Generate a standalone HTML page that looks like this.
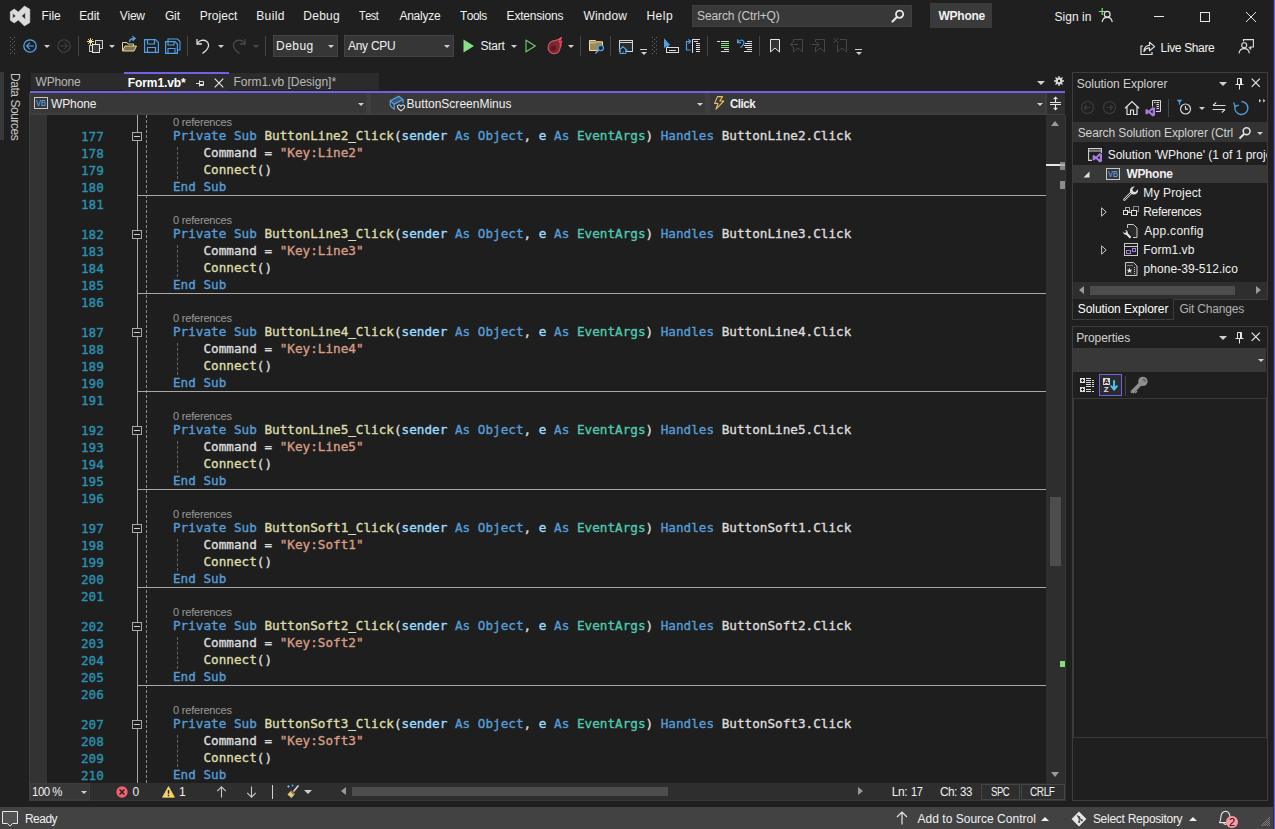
<!DOCTYPE html>
<html lang="en"><head><meta charset="utf-8"><title>WPhone - Form1.vb</title>
<style>
*{box-sizing:border-box;margin:0;padding:0}
html,body{width:1275px;height:829px;overflow:hidden;background:#1f1f1f}
body{position:relative;font-kerning:none;font-family:"Liberation Sans",sans-serif;font-size:12px;color:#f0f0f0;-webkit-font-smoothing:antialiased}
.a{position:absolute}
.t{position:absolute;white-space:nowrap;line-height:16px;height:16px;letter-spacing:-0.25px}
.b{font-weight:bold}
.dim{color:#9a9a9a}
svg{position:absolute;overflow:visible}
.code{font-family:"DejaVu Sans Mono","Liberation Mono",monospace;font-size:12.66px;letter-spacing:0;white-space:pre;line-height:17px;height:17px;position:absolute;color:#dcdcdc;-webkit-text-stroke:0.35px}
.ln{color:#2b91af}
.k{color:#569cd6}.m{color:#dcdcaa}.p{color:#9cdcfe}.ty{color:#4ec9b0}.s{color:#d69d85}.w{color:#dcdcdc}
.cl{position:absolute;font-size:11px;line-height:13px;height:13px;color:#999;white-space:nowrap;letter-spacing:-0.2px}
.arr{position:absolute;width:0;height:0;border-left:3px solid transparent;border-right:3px solid transparent;border-top:3px solid #d0d0d0}
.sep{position:absolute;width:1px;background:#454545}
</style></head><body>
<svg style="left:0;top:0" width="40" height="32"><path fill="#dcdcdc" fill-rule="evenodd" stroke="#dcdcdc" stroke-width="0.6" stroke-linejoin="round" d="M24.4 6.1 L29.8 9.2 V22.6 L24.4 25.9 L18.4 19.9 L14.2 22.9 L10.3 20.2 V11.8 L14.2 9.1 L18.4 12.1 Z M25.3 12.6 V19.4 L21.6 16 Z M12.7 13.2 V18.6 L15.8 16 Z"/></svg>
<div class="t" style="left:41.5px;top:8px;line-height:16px;height:16px;letter-spacing:-0.05px;">File</div>
<div class="t" style="left:79.2px;top:8px;line-height:16px;height:16px;letter-spacing:-0.07px;">Edit</div>
<div class="t" style="left:119.8px;top:8px;line-height:16px;height:16px;letter-spacing:-0.26px;">View</div>
<div class="t" style="left:164.9px;top:8px;line-height:16px;height:16px;letter-spacing:-0.11px;">Git</div>
<div class="t" style="left:199.7px;top:8px;line-height:16px;height:16px;letter-spacing:0.05px;">Project</div>
<div class="t" style="left:256.2px;top:8px;line-height:16px;height:16px;letter-spacing:0.39px;">Build</div>
<div class="t" style="left:303.3px;top:8px;line-height:16px;height:16px;letter-spacing:0.26px;">Debug</div>
<div class="t" style="left:359.3px;top:8px;line-height:16px;height:16px;letter-spacing:-0.50px;transform:scaleX(0.902);transform-origin:0 50%;">Test</div>
<div class="t" style="left:399.4px;top:8px;line-height:16px;height:16px;letter-spacing:-0.25px;">Analyze</div>
<div class="t" style="left:460.2px;top:8px;line-height:16px;height:16px;letter-spacing:-0.50px;transform:scaleX(0.992);transform-origin:0 50%;">Tools</div>
<div class="t" style="left:506.6px;top:8px;line-height:16px;height:16px;letter-spacing:-0.20px;">Extensions</div>
<div class="t" style="left:583.4px;top:8px;line-height:16px;height:16px;letter-spacing:0.17px;">Window</div>
<div class="t" style="left:646.4px;top:8px;line-height:16px;height:16px;letter-spacing:0.53px;">Help</div>
<div class="a" style="left:692px;top:5px;width:220px;height:22px;background:#383838;border:1px solid #404040"></div>
<div class="t" style="left:697.0px;top:8px;line-height:16px;height:16px;letter-spacing:-0.11px;color:#c8c8c8">Search (Ctrl+Q)</div>
<svg style="left:891px;top:9px" width="14" height="14" viewBox="0 0 14 14"><circle cx="8.6" cy="5.2" r="3.6" fill="none" stroke="#e6e6e6" stroke-width="1.8"/><path d="M6 8 L1.5 12.5" stroke="#e6e6e6" stroke-width="2.2" stroke-linecap="round"/></svg>
<div class="a" style="left:930px;top:3px;width:62px;height:25px;background:#3a3a3a"></div>
<div class="t" style="left:938.5px;top:8px;line-height:16px;height:16px;letter-spacing:-0.25px;font-weight:bold;">WPhone</div>
<div class="t" style="left:1054.5px;top:9px;line-height:16px;height:16px;letter-spacing:0.04px;">Sign in</div>
<svg style="left:1098px;top:7px" width="16" height="16" viewBox="0 0 16 16"><path d="M0.8 4.5 H7.6 M4.2 1 V8" stroke="#7ee07e" stroke-width="1.2"/><circle cx="9.2" cy="7.2" r="2.9" fill="none" stroke="#e6e6e6" stroke-width="1.2"/><path d="M4.2 15 C4.6 11.5 7 10.3 9.2 10.3 C11.4 10.3 13.8 11.5 14.2 15" fill="none" stroke="#e6e6e6" stroke-width="1.2"/></svg>
<svg style="left:1150px;top:8px" width="112" height="18" viewBox="0 0 112 18"><path d="M4 8.5 H14" stroke="#e6e6e6" stroke-width="1"/><rect x="50.5" y="4.5" width="9" height="9" fill="none" stroke="#e6e6e6" stroke-width="1"/><path d="M96 4 L106 14 M106 4 L96 14" stroke="#e6e6e6" stroke-width="1"/></svg>
<svg style="left:10px;top:37px" width="6" height="18" shape-rendering="crispEdges"><g fill="#6a6a6a"><rect x="0" y="0" width="1" height="1"/><rect x="2" y="2" width="1" height="1"/><rect x="4" y="0" width="1" height="1"/><rect x="0" y="4" width="1" height="1"/><rect x="2" y="6" width="1" height="1"/><rect x="4" y="4" width="1" height="1"/><rect x="0" y="8" width="1" height="1"/><rect x="2" y="10" width="1" height="1"/><rect x="4" y="8" width="1" height="1"/><rect x="0" y="12" width="1" height="1"/><rect x="2" y="14" width="1" height="1"/><rect x="4" y="12" width="1" height="1"/><rect x="0" y="16" width="1" height="1"/><rect x="4" y="16" width="1" height="1"/></g></svg>
<svg style="left:21.5px;top:37.6px" width="16" height="16" viewBox="0 0 16 16"><circle cx="8" cy="8" r="6.2" fill="none" stroke="#55a8f5" stroke-width="1.25"/><path d="M11.8 8 H4.8 M8 4.6 L4.6 8 L8 11.4" fill="none" stroke="#55a8f5" stroke-width="1.05"/></svg>
<div class="arr" style="left:44px;top:45px;border-left-width:3px;border-right-width:3px;border-top:3px solid #d0d0d0"></div>
<svg style="left:55.5px;top:37.6px" width="16" height="16" viewBox="0 0 16 16"><circle cx="8" cy="8" r="6.2" fill="none" stroke="#454545" stroke-width="1.1"/><path d="M4.2 8 H11.2 M8 4.6 L11.4 8 L8 11.4" fill="none" stroke="#454545" stroke-width="1"/></svg>
<div class="sep" style="left:78px;top:36px;height:20px;background:#454545"></div>
<svg style="left:87px;top:38px" width="17" height="17" viewBox="0 0 17 17"><path d="M3.5 0 V7 M0 3.5 H7 M1.1 1.1 L5.9 5.9 M5.9 1.1 L1.1 5.9" stroke="#f5e0a0" stroke-width="1"/><rect x="8.5" y="2.5" width="7" height="8" fill="#2c2c2c" stroke="#c8c8c8"/><rect x="2.5" y="7.5" width="6" height="6" fill="#2c2c2c" stroke="#c0c0c0"/><rect x="5.5" y="6.5" width="7" height="8" fill="#3a3a3a" stroke="#e6e6e6"/></svg>
<div class="arr" style="left:109px;top:45px;border-left-width:3px;border-right-width:3px;border-top:3px solid #d0d0d0"></div>
<svg style="left:121px;top:36.3px" width="17" height="17" viewBox="0 0 17 17"><path d="M1.5 15 V6.5 H6 L7 8 H12.5 V10" fill="none" stroke="#ecd592" stroke-width="1"/><path d="M1.5 15 L4 10 H15.5 L13 15 Z" fill="#ecd592" fill-opacity="0.45" stroke="#ecd592" stroke-width="1"/><path d="M8.5 6 C8.5 3.5 10.5 2.5 13.5 2.5 M11.5 0.3 L14 2.5 L11.5 4.8" fill="none" stroke="#4f9fe8" stroke-width="1.4"/></svg>
<svg style="left:144px;top:38px" width="15" height="16" viewBox="0 0 15 16"><path d="M0.6 1.6 H11.5 L14.4 4.5 V14.4 H0.6 Z" fill="none" stroke="#4f9fe8" stroke-width="1.2"/><path d="M3.5 1.6 V6 H10.5 V1.6" fill="none" stroke="#4f9fe8" stroke-width="1.2"/><path d="M3.5 14.4 V9.5 H11.5 V14.4" fill="none" stroke="#4f9fe8" stroke-width="1.2"/></svg>
<svg style="left:165px;top:38px" width="16" height="16" viewBox="0 0 16 16"><path d="M3 3 V1 H12.5 L15 3.5 V12 H13" fill="none" stroke="#4f9fe8" stroke-width="1.1"/><path d="M0.6 3.6 H10 L12.4 6 V15.4 H0.6 Z" fill="none" stroke="#4f9fe8" stroke-width="1.2"/><path d="M3 3.6 V7 H9 V3.6 M3 15.4 V10.5 H10 V15.4" fill="none" stroke="#4f9fe8" stroke-width="1.1"/></svg>
<div class="sep" style="left:187px;top:36px;height:20px;background:#454545"></div>
<svg style="left:196px;top:38px" width="15" height="16" viewBox="0 0 15 16"><path d="M1 1 V6 H6" fill="none" stroke="#e0e0e0" stroke-width="1.3"/><path d="M1.3 5.7 C3 2.5 7.5 1 10.8 3.5 C13.6 5.8 13 9.5 10 12.5 L6.5 15.5" fill="none" stroke="#e0e0e0" stroke-width="1.3"/></svg>
<div class="arr" style="left:218px;top:45px;border-left-width:3px;border-right-width:3px;border-top:3px solid #d0d0d0"></div>
<svg style="left:231px;top:38px" width="15" height="16" viewBox="0 0 15 16"><g transform="translate(15,0) scale(-1,1)"><path d="M1 1 V6 H6" fill="none" stroke="#4a4a4a" stroke-width="1.3"/><path d="M1.3 5.7 C3 2.5 7.5 1 10.8 3.5 C13.6 5.8 13 9.5 10 12.5 L6.5 15.5" fill="none" stroke="#4a4a4a" stroke-width="1.3"/></g></svg>
<div class="arr" style="left:252.5px;top:45px;border-left-width:3px;border-right-width:3px;border-top:3px solid #4a4a4a"></div>
<div class="sep" style="left:265px;top:36px;height:20px;background:#454545"></div>
<div class="a" style="left:273px;top:35px;width:65px;height:22px;background:#363636;border:1px solid #434343"></div>
<div class="t" style="left:276.0px;top:38px;line-height:16px;height:16px;letter-spacing:0.46px;">Debug</div>
<div class="arr" style="left:328px;top:45px;border-left-width:3px;border-right-width:3px;border-top:3px solid #d0d0d0"></div>
<div class="a" style="left:344px;top:35px;width:110px;height:22px;background:#363636;border:1px solid #434343"></div>
<div class="t" style="left:347.9px;top:38px;line-height:16px;height:16px;letter-spacing:-0.25px;">Any CPU</div>
<div class="arr" style="left:443.5px;top:45px;border-left-width:3px;border-right-width:3px;border-top:3px solid #d0d0d0"></div>
<svg style="left:463px;top:39px" width="12" height="14" viewBox="0 0 12 14"><path d="M0.5 0.5 L11 7 L0.5 13.5 Z" fill="#87df87"/></svg>
<div class="t" style="left:480.5px;top:38px;line-height:16px;height:16px;letter-spacing:-0.26px;">Start</div>
<div class="arr" style="left:511px;top:45px;border-left-width:3px;border-right-width:3px;border-top:3px solid #d0d0d0"></div>
<svg style="left:525px;top:39px" width="12" height="14" viewBox="0 0 12 14"><path d="M1 1.2 L10.3 7 L1 12.8 Z" fill="none" stroke="#6fcf6f" stroke-width="1.1"/></svg>
<svg style="left:547px;top:37px" width="16" height="18" viewBox="0 0 16 18"><path d="M1 10.7 C1 6 4.5 3.8 8 3.6 C10.5 3.4 12.8 2 14.5 0.5 C14 2.5 13 4 11.8 5.2 C13 5.2 14 4.8 14.8 4.2 C14.5 6 13.8 7.2 12.8 8.2 C13.3 8.4 13.8 8.3 14.2 8.1 C13.8 9.5 13.2 10 13 11 C13 14.3 10.3 16.7 7 16.7 C3.7 16.7 1 14 1 10.7 Z" fill="#7c2832" stroke="#e8525e" stroke-width="1.1" stroke-linejoin="round"/><circle cx="6.3" cy="11.2" r="2.6" fill="#5c1a24"/></svg>
<div class="arr" style="left:567.5px;top:45px;border-left-width:3px;border-right-width:3px;border-top:3px solid #d0d0d0"></div>
<div class="sep" style="left:580px;top:36px;height:20px;background:#454545"></div>
<svg style="left:588px;top:39px" width="18" height="16" viewBox="0 0 18 16"><path d="M1.5 1.5 H7.5 L8.5 2.8 H14.5 V11.5 H1.5 Z" fill="#9a8a5c" stroke="#f2dea0" stroke-width="1"/><path d="M1.5 3.8 H8" stroke="#f2dea0" stroke-width="0.8"/><circle cx="12.8" cy="9" r="2.7" fill="#23262c" stroke="#4f9fe8" stroke-width="1.2"/><path d="M10.8 11 L7.4 14.6" stroke="#4f9fe8" stroke-width="1.4"/></svg>
<div class="sep" style="left:610px;top:36px;height:20px;background:#454545"></div>
<svg style="left:618px;top:39px" width="17" height="16" viewBox="0 0 17 16"><rect x="1.5" y="1.5" width="13" height="11" fill="#2c2c2c" stroke="#d4d4d4" stroke-width="1"/><path d="M1.5 3.5 H14.5" stroke="#d4d4d4" stroke-width="1"/><path d="M0.8 11.5 L5 7.8 L9.2 11.5 M2.2 10.8 V14.5 H7.8 V10.8" fill="#1f1f1f" stroke="#4f9fe8" stroke-width="1.1"/><path d="M5 14.5 V12.5" stroke="#4f9fe8" stroke-width="1"/></svg>
<div class="a" style="left:640px;top:49px;width:7px;height:1px;background:#d0d0d0"></div>
<div class="arr" style="left:640.5px;top:52px;border-left-width:3px;border-right-width:3px;border-top:3px solid #d0d0d0"></div>
<svg style="left:652px;top:37px" width="6" height="18" shape-rendering="crispEdges"><g fill="#6a6a6a"><rect x="0" y="0" width="1" height="1"/><rect x="2" y="2" width="1" height="1"/><rect x="4" y="0" width="1" height="1"/><rect x="0" y="4" width="1" height="1"/><rect x="2" y="6" width="1" height="1"/><rect x="4" y="4" width="1" height="1"/><rect x="0" y="8" width="1" height="1"/><rect x="2" y="10" width="1" height="1"/><rect x="4" y="8" width="1" height="1"/><rect x="0" y="12" width="1" height="1"/><rect x="2" y="14" width="1" height="1"/><rect x="4" y="12" width="1" height="1"/><rect x="0" y="16" width="1" height="1"/><rect x="4" y="16" width="1" height="1"/></g></svg>
<svg style="left:0;top:0" width="800" height="60"><path d="M664 38.3 V48.2 L666.6 46 L667.4 48 H668.6 V45.6 L670.2 45 Z" fill="#4f9fe8"/><g shape-rendering="crispEdges" fill="none" stroke="#dcdcdc" stroke-width="1"><rect x="666.5" y="47.5" width="12" height="5"/><path d="M669 50.5 H676"/></g><path d="M690.5 50 H686.5 V41.5 H690 M688.4 39.4 L690.6 41.5 L688.4 43.6" fill="none" stroke="#4f9fe8" stroke-width="1.2"/><g shape-rendering="crispEdges" fill="none" stroke="#dcdcdc" stroke-width="1"><path d="M692.5 39 V53 M692 39.5 H700 M694 41.5 H698 M696 43.5 H700 M696 45.5 H700 M696 47.5 H700 M696 49.5 H700 M696 51.5 H700"/><path d="M717 41.5 H720 M721 41.5 H729 M724 49.5 H729 M721 51.5 H729"/><path d="M721 43.5 H729 M721 45.5 H729 M721 47.5 H729" stroke="#7ee07e"/><path d="M747 41.5 H752 M745 43.5 H752 M744 45.5 H752 M745 47.5 H752 M747 49.5 H752 M744 51.5 H752"/></g><path d="M737.6 39.2 V42.6 H741 M737.8 42.4 C738.8 40 742.5 39.3 743.8 41.8 C744.6 43.6 743.2 45.4 740.5 47.8" fill="none" stroke="#4f9fe8" stroke-width="1.2"/></svg>
<div class="sep" style="left:707px;top:36px;height:20px;background:#454545"></div>
<div class="sep" style="left:759px;top:36px;height:20px;background:#454545"></div>
<svg style="left:0;top:0" width="900" height="60"><path d="M770.5 39.5 H779.5 V52 L775 48 L770.5 52 Z" fill="#343434" stroke="#e6e6e6" stroke-width="1"/><g fill="none" stroke="#474747" stroke-width="1"><path d="M793.5 42 V39.5 H802.5 V52 L798 48 L793.5 52 V47 M798 44.5 H790.5 M793 42 L790.5 44.5 L793 47"/><path d="M815.5 42 V39.5 H824.5 V52 L820 48 L815.5 52 V47 M811.5 44.5 H819 M816.5 42 L819 44.5 L816.5 47"/><path d="M840 39.5 H846.5 V52 L842 48 L837.5 52 V44.5 M833.5 38 L838.5 43 M838.5 38 L833.5 43"/></g></svg>
<div class="a" style="left:855px;top:49px;width:7px;height:1px;background:#d0d0d0"></div>
<div class="arr" style="left:855.5px;top:52px;border-left-width:3px;border-right-width:3px;border-top:3px solid #d0d0d0"></div>
<svg style="left:1140px;top:40px" width="16" height="16" viewBox="0 0 16 16"><path d="M3 6 H1 V14.5 H12 V12" fill="none" stroke="#e0e0e0" stroke-width="1.2"/><path d="M4 11.5 C4 7.5 6.5 5.3 9.5 5.3 V2.3 L14.6 6.6 L9.5 10.8 V7.8 C7.3 7.8 5.3 8.8 4 11.5 Z" fill="none" stroke="#e0e0e0" stroke-width="1.2" stroke-linejoin="round"/></svg>
<div class="t" style="left:1160.6px;top:39.5px;line-height:16px;height:16px;letter-spacing:-0.36px;">Live Share</div>
<svg style="left:1238px;top:39px" width="16" height="15" viewBox="0 0 16 15"><path d="M5.5 2.5 V0.6 H15.4 V8 H12.6 V10 L10.8 8.2" fill="none" stroke="#e0e0e0" stroke-width="1.1"/><circle cx="6.2" cy="6.3" r="2.5" fill="none" stroke="#e0e0e0" stroke-width="1.1"/><path d="M1 14.4 C1.4 11 3.6 9.6 6.2 9.6 C8.8 9.6 11 11 11.4 14.4" fill="none" stroke="#e0e0e0" stroke-width="1.1"/></svg>
<div class="a" style="left:29px;top:115px;width:1017px;height:668px;background:#1e1e1e;border-left:1px solid #3d3d3d"></div>
<div class="a" style="left:30px;top:115px;width:17px;height:668px;background:#333"></div>
<div class="a" style="left:137px;top:115px;width:1px;height:668px;background:#a8a8a8"></div>
<div class="a" style="left:146px;top:115px;width:0;height:668px;border-left:1px dashed #8a8a8a"></div>
<div class="cl" style="left:173px;top:116px">0 references</div>
<div class="code ln" style="left:81px;top:127.7px">177</div>
<div class="code" style="left:173px;top:127px"><span class="k">Private Sub </span><span class="m">ButtonLine2_Click</span><span class="w">(</span><span class="p">sender</span><span class="w"> </span><span class="k">As</span><span class="w"> </span><span class="k">Object</span><span class="w">, </span><span class="p">e</span><span class="w"> </span><span class="k">As</span><span class="w"> </span><span class="ty">EventArgs</span><span class="w">) </span><span class="k">Handles</span><span class="w"> ButtonLine2.Click</span></div>
<div class="a" style="left:132px;top:132px;width:10px;height:9px;background:#1e1e1e;border:1px solid #a8a8a8"></div><div class="a" style="left:134px;top:136px;width:6px;height:1px;background:#d0d0d0"></div>
<div class="a" style="left:177px;top:147px;width:0;height:32px;border-left:1px dashed #646464"></div>
<div class="code ln" style="left:81px;top:144.7px">178</div>
<div class="code" style="left:173px;top:144px"><span class="w">    Command = </span><span class="s">"Key:Line2"</span></div>
<div class="code ln" style="left:81px;top:161.7px">179</div>
<div class="code" style="left:173px;top:161px"><span class="w">    </span><span class="m">Connect</span><span class="w">()</span></div>
<div class="code ln" style="left:81px;top:178.7px">180</div>
<div class="code" style="left:173px;top:178px"><span class="k">End Sub</span></div>
<div class="code ln" style="left:81px;top:195.7px">181</div>
<div class="a" style="left:137px;top:195px;width:909px;height:1px;background:#a8a8a8"></div>
<div class="cl" style="left:173px;top:214px">0 references</div>
<div class="code ln" style="left:81px;top:225.7px">182</div>
<div class="code" style="left:173px;top:225px"><span class="k">Private Sub </span><span class="m">ButtonLine3_Click</span><span class="w">(</span><span class="p">sender</span><span class="w"> </span><span class="k">As</span><span class="w"> </span><span class="k">Object</span><span class="w">, </span><span class="p">e</span><span class="w"> </span><span class="k">As</span><span class="w"> </span><span class="ty">EventArgs</span><span class="w">) </span><span class="k">Handles</span><span class="w"> ButtonLine3.Click</span></div>
<div class="a" style="left:132px;top:230px;width:10px;height:9px;background:#1e1e1e;border:1px solid #a8a8a8"></div><div class="a" style="left:134px;top:234px;width:6px;height:1px;background:#d0d0d0"></div>
<div class="a" style="left:177px;top:245px;width:0;height:32px;border-left:1px dashed #646464"></div>
<div class="code ln" style="left:81px;top:242.7px">183</div>
<div class="code" style="left:173px;top:242px"><span class="w">    Command = </span><span class="s">"Key:Line3"</span></div>
<div class="code ln" style="left:81px;top:259.7px">184</div>
<div class="code" style="left:173px;top:259px"><span class="w">    </span><span class="m">Connect</span><span class="w">()</span></div>
<div class="code ln" style="left:81px;top:276.7px">185</div>
<div class="code" style="left:173px;top:276px"><span class="k">End Sub</span></div>
<div class="code ln" style="left:81px;top:293.7px">186</div>
<div class="a" style="left:137px;top:293px;width:909px;height:1px;background:#a8a8a8"></div>
<div class="cl" style="left:173px;top:312px">0 references</div>
<div class="code ln" style="left:81px;top:323.7px">187</div>
<div class="code" style="left:173px;top:323px"><span class="k">Private Sub </span><span class="m">ButtonLine4_Click</span><span class="w">(</span><span class="p">sender</span><span class="w"> </span><span class="k">As</span><span class="w"> </span><span class="k">Object</span><span class="w">, </span><span class="p">e</span><span class="w"> </span><span class="k">As</span><span class="w"> </span><span class="ty">EventArgs</span><span class="w">) </span><span class="k">Handles</span><span class="w"> ButtonLine4.Click</span></div>
<div class="a" style="left:132px;top:328px;width:10px;height:9px;background:#1e1e1e;border:1px solid #a8a8a8"></div><div class="a" style="left:134px;top:332px;width:6px;height:1px;background:#d0d0d0"></div>
<div class="a" style="left:177px;top:343px;width:0;height:32px;border-left:1px dashed #646464"></div>
<div class="code ln" style="left:81px;top:340.7px">188</div>
<div class="code" style="left:173px;top:340px"><span class="w">    Command = </span><span class="s">"Key:Line4"</span></div>
<div class="code ln" style="left:81px;top:357.7px">189</div>
<div class="code" style="left:173px;top:357px"><span class="w">    </span><span class="m">Connect</span><span class="w">()</span></div>
<div class="code ln" style="left:81px;top:374.7px">190</div>
<div class="code" style="left:173px;top:374px"><span class="k">End Sub</span></div>
<div class="code ln" style="left:81px;top:391.7px">191</div>
<div class="a" style="left:137px;top:391px;width:909px;height:1px;background:#a8a8a8"></div>
<div class="cl" style="left:173px;top:410px">0 references</div>
<div class="code ln" style="left:81px;top:421.7px">192</div>
<div class="code" style="left:173px;top:421px"><span class="k">Private Sub </span><span class="m">ButtonLine5_Click</span><span class="w">(</span><span class="p">sender</span><span class="w"> </span><span class="k">As</span><span class="w"> </span><span class="k">Object</span><span class="w">, </span><span class="p">e</span><span class="w"> </span><span class="k">As</span><span class="w"> </span><span class="ty">EventArgs</span><span class="w">) </span><span class="k">Handles</span><span class="w"> ButtonLine5.Click</span></div>
<div class="a" style="left:132px;top:426px;width:10px;height:9px;background:#1e1e1e;border:1px solid #a8a8a8"></div><div class="a" style="left:134px;top:430px;width:6px;height:1px;background:#d0d0d0"></div>
<div class="a" style="left:177px;top:441px;width:0;height:32px;border-left:1px dashed #646464"></div>
<div class="code ln" style="left:81px;top:438.7px">193</div>
<div class="code" style="left:173px;top:438px"><span class="w">    Command = </span><span class="s">"Key:Line5"</span></div>
<div class="code ln" style="left:81px;top:455.7px">194</div>
<div class="code" style="left:173px;top:455px"><span class="w">    </span><span class="m">Connect</span><span class="w">()</span></div>
<div class="code ln" style="left:81px;top:472.7px">195</div>
<div class="code" style="left:173px;top:472px"><span class="k">End Sub</span></div>
<div class="code ln" style="left:81px;top:489.7px">196</div>
<div class="a" style="left:137px;top:489px;width:909px;height:1px;background:#a8a8a8"></div>
<div class="cl" style="left:173px;top:508px">0 references</div>
<div class="code ln" style="left:81px;top:519.7px">197</div>
<div class="code" style="left:173px;top:519px"><span class="k">Private Sub </span><span class="m">ButtonSoft1_Click</span><span class="w">(</span><span class="p">sender</span><span class="w"> </span><span class="k">As</span><span class="w"> </span><span class="k">Object</span><span class="w">, </span><span class="p">e</span><span class="w"> </span><span class="k">As</span><span class="w"> </span><span class="ty">EventArgs</span><span class="w">) </span><span class="k">Handles</span><span class="w"> ButtonSoft1.Click</span></div>
<div class="a" style="left:132px;top:524px;width:10px;height:9px;background:#1e1e1e;border:1px solid #a8a8a8"></div><div class="a" style="left:134px;top:528px;width:6px;height:1px;background:#d0d0d0"></div>
<div class="a" style="left:177px;top:539px;width:0;height:32px;border-left:1px dashed #646464"></div>
<div class="code ln" style="left:81px;top:536.7px">198</div>
<div class="code" style="left:173px;top:536px"><span class="w">    Command = </span><span class="s">"Key:Soft1"</span></div>
<div class="code ln" style="left:81px;top:553.7px">199</div>
<div class="code" style="left:173px;top:553px"><span class="w">    </span><span class="m">Connect</span><span class="w">()</span></div>
<div class="code ln" style="left:81px;top:570.7px">200</div>
<div class="code" style="left:173px;top:570px"><span class="k">End Sub</span></div>
<div class="code ln" style="left:81px;top:587.7px">201</div>
<div class="a" style="left:137px;top:587px;width:909px;height:1px;background:#a8a8a8"></div>
<div class="cl" style="left:173px;top:606px">0 references</div>
<div class="code ln" style="left:81px;top:617.7px">202</div>
<div class="code" style="left:173px;top:617px"><span class="k">Private Sub </span><span class="m">ButtonSoft2_Click</span><span class="w">(</span><span class="p">sender</span><span class="w"> </span><span class="k">As</span><span class="w"> </span><span class="k">Object</span><span class="w">, </span><span class="p">e</span><span class="w"> </span><span class="k">As</span><span class="w"> </span><span class="ty">EventArgs</span><span class="w">) </span><span class="k">Handles</span><span class="w"> ButtonSoft2.Click</span></div>
<div class="a" style="left:132px;top:622px;width:10px;height:9px;background:#1e1e1e;border:1px solid #a8a8a8"></div><div class="a" style="left:134px;top:626px;width:6px;height:1px;background:#d0d0d0"></div>
<div class="a" style="left:177px;top:637px;width:0;height:32px;border-left:1px dashed #646464"></div>
<div class="code ln" style="left:81px;top:634.7px">203</div>
<div class="code" style="left:173px;top:634px"><span class="w">    Command = </span><span class="s">"Key:Soft2"</span></div>
<div class="code ln" style="left:81px;top:651.7px">204</div>
<div class="code" style="left:173px;top:651px"><span class="w">    </span><span class="m">Connect</span><span class="w">()</span></div>
<div class="code ln" style="left:81px;top:668.7px">205</div>
<div class="code" style="left:173px;top:668px"><span class="k">End Sub</span></div>
<div class="code ln" style="left:81px;top:685.7px">206</div>
<div class="a" style="left:137px;top:685px;width:909px;height:1px;background:#a8a8a8"></div>
<div class="cl" style="left:173px;top:704px">0 references</div>
<div class="code ln" style="left:81px;top:715.7px">207</div>
<div class="code" style="left:173px;top:715px"><span class="k">Private Sub </span><span class="m">ButtonSoft3_Click</span><span class="w">(</span><span class="p">sender</span><span class="w"> </span><span class="k">As</span><span class="w"> </span><span class="k">Object</span><span class="w">, </span><span class="p">e</span><span class="w"> </span><span class="k">As</span><span class="w"> </span><span class="ty">EventArgs</span><span class="w">) </span><span class="k">Handles</span><span class="w"> ButtonSoft3.Click</span></div>
<div class="a" style="left:132px;top:720px;width:10px;height:9px;background:#1e1e1e;border:1px solid #a8a8a8"></div><div class="a" style="left:134px;top:724px;width:6px;height:1px;background:#d0d0d0"></div>
<div class="a" style="left:177px;top:735px;width:0;height:32px;border-left:1px dashed #646464"></div>
<div class="code ln" style="left:81px;top:732.7px">208</div>
<div class="code" style="left:173px;top:732px"><span class="w">    Command = </span><span class="s">"Key:Soft3"</span></div>
<div class="code ln" style="left:81px;top:749.7px">209</div>
<div class="code" style="left:173px;top:749px"><span class="w">    </span><span class="m">Connect</span><span class="w">()</span></div>
<div class="code ln" style="left:81px;top:766.7px">210</div>
<div class="code" style="left:173px;top:766px"><span class="k">End Sub</span></div>
<div class="a" style="left:1046px;top:115px;width:19px;height:668px;background:#2e2e2e"></div>
<div class="a" style="left:1065px;top:115px;width:1px;height:686px;background:#383838"></div>
<div class="arr" style="left:1051px;top:121px;border-top:none;border-left:4px solid transparent;border-right:4px solid transparent;border-bottom:5px solid #999"></div>
<div class="arr" style="left:1051px;top:772px;border-left:4px solid transparent;border-right:4px solid transparent;border-top:5px solid #999"></div>
<div class="a" style="left:1046px;top:164px;width:19px;height:2px;background:#e6e6e6"></div>
<div class="a" style="left:1060px;top:162px;width:5px;height:8px;background:rgba(160,160,160,0.75)"></div>
<div class="a" style="left:1060px;top:181px;width:5px;height:8px;background:#8c8c8c"></div>
<div class="a" style="left:1050px;top:497px;width:11px;height:69px;background:#4d4d4d"></div>
<div class="a" style="left:1060px;top:661px;width:5px;height:6px;background:#86dc78"></div>
<div class="a" style="left:0;top:72px;width:4px;height:68px;background:#383838"></div>
<div class="t" style="left:7px;top:72.5px;width:16px;height:80px;writing-mode:vertical-rl;line-height:16px;color:#c8c8c8;letter-spacing:-0.45px">Data Sources</div>
<div class="a" style="left:31px;top:73px;width:93px;height:17px;background:#2b2b2b"></div>
<div class="t" style="left:35.5px;top:74px;line-height:16px;height:16px;letter-spacing:-0.17px;color:#b8b8b8">WPhone</div>
<div class="a" style="left:124px;top:72px;width:105px;height:20px;background:#2b2b2b;border-top:2px solid #7160e8"></div>
<div class="t" style="left:127.8px;top:74.5px;line-height:16px;height:16px;letter-spacing:-0.10px;font-weight:bold;color:#fff">Form1.vb*</div>
<svg style="left:196px;top:79px" width="9" height="9" viewBox="0 0 9 9"><path d="M0 4.5 H3.5 M3.5 1.5 V7.5 M3.5 2.5 H7.5 V6.5 H3.5 M3.5 5.5 H7.5" fill="none" stroke="#e0e0e0" stroke-width="1"/></svg>
<svg style="left:214px;top:78px" width="10" height="10" viewBox="0 0 10 10"><path d="M0.7 0.7 L9.3 9.3 M9.3 0.7 L0.7 9.3" stroke="#e6e6e6" stroke-width="1.2"/></svg>
<div class="a" style="left:229px;top:73px;width:150px;height:17px;background:#2b2b2b"></div>
<div class="t" style="left:233.4px;top:74px;line-height:16px;height:16px;letter-spacing:-0.00px;color:#b8b8b8">Form1.vb [Design]*</div>
<div class="arr" style="left:1037px;top:81px;border-left-width:4px;border-right-width:4px;border-top:4px solid #d0d0d0"></div>
<svg style="left:1054px;top:76px" width="10" height="10" viewBox="0 0 10 10"><circle cx="5" cy="5" r="2.6" fill="none" stroke="#d8d8d8" stroke-width="1.8"/><path d="M5 0 V10 M0 5 H10 M1.5 1.5 L8.5 8.5 M8.5 1.5 L1.5 8.5" stroke="#d8d8d8" stroke-width="1.3"/><circle cx="5" cy="5" r="1.2" fill="#1f1f1f"/></svg>
<div class="a" style="left:30px;top:91px;width:1035px;height:2px;background:#7160e8"></div>
<div class="a" style="left:29px;top:93px;width:1036px;height:22px;background:#3f3f3f"></div>
<div class="a" style="left:31px;top:93px;width:335px;height:20px;background:#383838"></div>
<div class="a" style="left:371px;top:93px;width:334px;height:20px;background:#383838"></div>
<div class="a" style="left:710px;top:93px;width:335px;height:20px;background:#383838"></div>
<div class="a" style="left:1047px;top:93px;width:18px;height:21px;background:#2e2e2e"></div>
<div class="a" style="left:34px;top:97px;width:14px;height:12px;border:1px solid #c8c8c8"></div>
<div class="t" style="left:36px;top:98px;font-size:9.5px;line-height:10px;height:10px;color:#5eb0ff;letter-spacing:0;transform:scaleX(0.8);transform-origin:0 0">VB</div>
<div class="t" style="left:51.1px;top:95.5px;line-height:16px;height:16px;letter-spacing:-0.15px;">WPhone</div>
<div class="arr" style="left:358px;top:103px;border-left-width:3px;border-right-width:3px;border-top:3px solid #d0d0d0"></div>
<svg style="left:0;top:0" width="420" height="116"><path d="M390.2 100.8 L398.8 96.3 L403 99.6 L394.2 104.3 Z" fill="#3a5878" stroke="#58a6f0" stroke-width="1.1" stroke-linejoin="round"/><path d="M390.2 100.8 V105.6 L394.2 109.3 V104.3 M403 99.6 V103" fill="none" stroke="#58a6f0" stroke-width="1.1" stroke-linejoin="round"/><path d="M401 106.2 C400 104.2 397.4 104.8 397.4 106.8 C397.4 108.6 399.6 109.6 401 110.8 C402.4 109.6 404.7 108.6 404.7 106.8 C404.7 104.8 402 104.2 401 106.2 Z" fill="#303030" stroke="#e0e0e0" stroke-width="1.1"/></svg>
<div class="t" style="left:406.6px;top:95.5px;line-height:16px;height:16px;letter-spacing:0.01px;">ButtonScreenMinus</div>
<div class="arr" style="left:696.5px;top:103px;border-left-width:3px;border-right-width:3px;border-top:3px solid #d0d0d0"></div>
<svg style="left:713px;top:96px" width="12" height="14" viewBox="0 0 12 14"><path d="M4.5 0.6 H9.5 L6.8 5 H10.8 L3 13.2 L5 7.4 H1.6 Z" fill="none" stroke="#e8c060" stroke-width="1.1" stroke-linejoin="round"/></svg>
<div class="t" style="left:729.9px;top:95.5px;line-height:16px;height:16px;letter-spacing:-0.50px;transform:scaleX(0.961);transform-origin:0 50%;font-weight:bold;">Click</div>
<div class="arr" style="left:1037px;top:103px;border-left-width:3px;border-right-width:3px;border-top:3px solid #d0d0d0"></div>
<svg style="left:1049px;top:96px" width="13" height="15" viewBox="0 0 13 15"><path d="M1 6.5 H12 M1 8.5 H12" stroke="#e6e6e6" stroke-width="1" shape-rendering="crispEdges"/><path d="M6.5 1.2 V6 M6.5 9 V13.8 M4.6 3.2 L6.5 1.3 L8.4 3.2 M4.6 11.8 L6.5 13.7 L8.4 11.8" fill="none" stroke="#e6e6e6" stroke-width="1.1"/></svg>
<div class="a" style="left:29px;top:783px;width:1037px;height:18px;background:#2e2e2e;border-bottom:1px solid #383838"></div>
<div class="a" style="left:29px;top:783px;width:61px;height:18px;background:#3d3d3d"></div><div class="a" style="left:31px;top:784px;width:58px;height:15px;background:#383838"></div>
<div class="t" style="left:31.7px;top:784px;line-height:16px;height:16px;letter-spacing:-0.50px;transform:scaleX(0.953);transform-origin:0 50%;">100 %</div>
<div class="arr" style="left:81px;top:791px;border-left-width:3px;border-right-width:3px;border-top:3px solid #d0d0d0"></div>
<svg style="left:116px;top:786px" width="12" height="12" viewBox="0 0 12 12"><circle cx="6" cy="6" r="5.7" fill="#f4606c"/><path d="M3.6 3.6 L8.4 8.4 M8.4 3.6 L3.6 8.4" stroke="#1f1f1f" stroke-width="1.4"/></svg>
<div class="t" style="left:132.5px;top:784px;line-height:16px;height:16px;letter-spacing:0.00px;">0</div>
<svg style="left:162px;top:786px" width="13" height="12" viewBox="0 0 13 12"><path d="M6.5 0.6 L12.4 11.2 H0.6 Z" fill="#f5d565" stroke="#f5d565" stroke-width="0.8" stroke-linejoin="round"/><path d="M6.5 4 V7.8 M6.5 8.8 V10.2" stroke="#1f1f1f" stroke-width="1.4"/></svg>
<div class="t" style="left:179.1px;top:784px;line-height:16px;height:16px;letter-spacing:0.00px;">1</div>
<svg style="left:216px;top:786px" width="11" height="12" viewBox="0 0 11 12"><path d="M5.5 11.5 V1 M1.2 5.2 L5.5 0.9 L9.8 5.2" fill="none" stroke="#c8c8c8" stroke-width="1.1"/></svg>
<svg style="left:245.5px;top:786px" width="11" height="12" viewBox="0 0 11 12"><path d="M5.5 0.5 V11 M1.2 6.8 L5.5 11.1 L9.8 6.8" fill="none" stroke="#c8c8c8" stroke-width="1.1"/></svg>
<div class="a" style="left:272px;top:785px;width:1px;height:14px;background:#d0d0d0"></div>
<svg style="left:286px;top:784px" width="15" height="15" viewBox="0 0 15 15"><path d="M12.5 1.5 L7.5 7.5" stroke="#d8d8d8" stroke-width="1.6"/><path d="M5.2 6.5 L9 10 L5.5 14 L1.5 10.5 Z" fill="#e8c87a"/><path d="M4.6 7.2 L8.3 10.7" stroke="#1f1f1f" stroke-width="0.8"/><path d="M2.5 1 V4 M1 2.5 H4 M6.5 0.5 V2.5 M5.5 1.5 H7.5" stroke="#58a6f0" stroke-width="0.9"/></svg>
<div class="arr" style="left:303.5px;top:790px;border-left-width:4px;border-right-width:4px;border-top:4px solid #d0d0d0"></div>
<div class="arr" style="left:341px;top:787px;border:none;border-top:4px solid transparent;border-bottom:4px solid transparent;border-right:5px solid #999"></div>
<div class="a" style="left:352px;top:787px;width:316px;height:9px;background:#4d4d4d"></div>
<div class="arr" style="left:858px;top:787px;border:none;border-top:4px solid transparent;border-bottom:4px solid transparent;border-left:5px solid #999"></div>
<div class="t" style="left:891.7px;top:784px;line-height:16px;height:16px;letter-spacing:-0.35px;">Ln:</div>
<div class="t" style="left:910.5px;top:784px;line-height:16px;height:16px;letter-spacing:-0.50px;transform:scaleX(0.914);transform-origin:0 50%;">17</div>
<div class="t" style="left:939.8px;top:784px;line-height:16px;height:16px;letter-spacing:-0.50px;transform:scaleX(0.983);transform-origin:0 50%;">Ch:</div>
<div class="t" style="left:960.0px;top:784px;line-height:16px;height:16px;letter-spacing:-0.50px;transform:scaleX(0.953);transform-origin:0 50%;">33</div>
<div class="a" style="left:981px;top:784px;width:39px;height:16px;border:1px solid #454545"></div>
<div class="t" style="left:991.4px;top:784px;line-height:16px;height:16px;letter-spacing:-0.50px;transform:scaleX(0.791);transform-origin:0 50%;">SPC</div>
<div class="a" style="left:1021px;top:784px;width:44px;height:16px;border:1px solid #454545"></div>
<div class="t" style="left:1030.0px;top:784px;line-height:16px;height:16px;letter-spacing:-0.50px;transform:scaleX(0.835);transform-origin:0 50%;">CRLF</div>
<div class="a" style="left:0;top:807px;width:1275px;height:22px;background:#424242"></div>
<svg style="left:2px;top:811px" width="17" height="18" viewBox="0 0 17 18"><path d="M0.5 0.5 H15.5 V12.5 H10.6 L8 15.2 L5.4 12.5 H0.5 Z" fill="#525252" stroke="#e6e6e6" stroke-width="1"/></svg>
<div class="t" style="left:25.3px;top:810.5px;line-height:16px;height:16px;letter-spacing:-0.50px;transform:scaleX(0.994);transform-origin:0 50%;">Ready</div>
<svg style="left:896px;top:811px" width="12" height="14" viewBox="0 0 12 14"><path d="M6 13.5 V1 M1 6 L6 1 L11 6" fill="none" stroke="#e6e6e6" stroke-width="1.2"/></svg>
<div class="t" style="left:917.6px;top:810.5px;line-height:16px;height:16px;letter-spacing:0.01px;">Add to Source Control</div>
<div class="arr" style="left:1041px;top:816.5px;border-left-width:4px;border-right-width:4px;border-top:none;border-bottom:4px solid #f0f0f0"></div>
<svg style="left:1071px;top:811px" width="16" height="16" viewBox="0 0 16 16"><path d="M8 0.6 L15.4 8 L8 15.4 L0.6 8 Z" fill="#e6e6e6"/><path d="M6.2 4.5 L8.2 6.5 V11 M8.2 6.8 L10.6 9.2" stroke="#424242" stroke-width="1.1" fill="none"/><circle cx="8.2" cy="11" r="1.1" fill="#424242"/><circle cx="10.8" cy="9.3" r="1.1" fill="#424242"/><circle cx="8.2" cy="6.4" r="1.1" fill="#424242"/></svg>
<div class="t" style="left:1092.9px;top:810.5px;line-height:16px;height:16px;letter-spacing:-0.27px;">Select Repository</div>
<div class="arr" style="left:1188.5px;top:816.5px;border-left-width:4px;border-right-width:4px;border-top:none;border-bottom:4px solid #f0f0f0"></div>
<svg style="left:1218px;top:810px" width="22" height="19" viewBox="0 0 22 19"><path d="M1.2 12.6 C3.4 10.6 2.4 7 3.4 4.6 C4.2 2.4 6 1.3 7.5 1.3 C9 1.3 10.8 2.4 11.6 4.6 C12 6 11.8 7 12 8 M1.2 12.6 H8 M5.6 12.6 C5.6 15 9 15 9.2 12.8" fill="none" stroke="#e6e6e6" stroke-width="1.1"/><circle cx="14" cy="12" r="6" fill="#ff98a4"/></svg>
<div class="t" style="left:1228px;top:815.5px;font-size:11px;line-height:13px;height:13px;color:#101010;width:8px;text-align:center;letter-spacing:0">2</div>
<svg style="left:0;top:0" width="1275" height="829" shape-rendering="crispEdges"><g fill="#7a7a7a"><rect x="1269" y="817" width="1" height="1"/><rect x="1268" y="818" width="1" height="1"/><rect x="1267" y="819" width="1" height="1"/><rect x="1269" y="819" width="1" height="1"/><rect x="1266" y="820" width="1" height="1"/><rect x="1268" y="820" width="1" height="1"/><rect x="1265" y="821" width="1" height="1"/><rect x="1267" y="821" width="1" height="1"/><rect x="1269" y="821" width="1" height="1"/><rect x="1264" y="822" width="1" height="1"/><rect x="1266" y="822" width="1" height="1"/><rect x="1268" y="822" width="1" height="1"/><rect x="1263" y="823" width="1" height="1"/><rect x="1265" y="823" width="1" height="1"/><rect x="1267" y="823" width="1" height="1"/><rect x="1269" y="823" width="1" height="1"/><rect x="1262" y="824" width="1" height="1"/><rect x="1264" y="824" width="1" height="1"/><rect x="1266" y="824" width="1" height="1"/><rect x="1268" y="824" width="1" height="1"/><rect x="1261" y="825" width="1" height="1"/><rect x="1263" y="825" width="1" height="1"/><rect x="1265" y="825" width="1" height="1"/><rect x="1267" y="825" width="1" height="1"/><rect x="1269" y="825" width="1" height="1"/></g></svg>
<div class="a" style="left:1273px;top:0;width:1px;height:829px;background:#2f2c4a"></div><div class="a" style="left:1274px;top:0;width:1px;height:829px;background:#6b5fe0"></div>
<div class="a" style="left:1072px;top:72px;width:196px;height:228px;border:1px solid #3d3d3d;background:#1f1f1f"></div>
<div class="t" style="left:1076.7px;top:75.5px;line-height:16px;height:16px;letter-spacing:-0.04px;color:#d0d0d0">Solution Explorer</div>
<div class="arr" style="left:1218.5px;top:82px;border-left-width:4px;border-right-width:4px;border-top:4px solid #d0d0d0"></div>
<svg style="left:1235px;top:78px" width="9" height="12" viewBox="0 0 9 12"><path d="M2.5 0.5 H6.5 V6 M2.5 0.5 V6 M5.5 0.5 V6 M0.5 6.5 H8.5 M4.5 6.5 V11.5" fill="none" stroke="#e6e6e6" stroke-width="1"/></svg>
<svg style="left:1251.3px;top:78.3px" width="9.5" height="9.5" viewBox="0 0 10 10"><path d="M0.7 0.7 L9.3 9.3 M9.3 0.7 L0.7 9.3" stroke="#e6e6e6" stroke-width="1.3"/></svg>
<svg style="left:1080px;top:100px" width="15" height="15" viewBox="0 0 15 15"><circle cx="7.5" cy="7.5" r="6" fill="none" stroke="#3d3d3d" stroke-width="1.1"/><path d="M10.5 7.5 H4.5 M6.8 5 L4.4 7.5 L6.8 10" fill="none" stroke="#3d3d3d" stroke-width="1.1"/></svg>
<svg style="left:1102px;top:100px" width="15" height="15" viewBox="0 0 15 15"><circle cx="7.5" cy="7.5" r="6" fill="none" stroke="#3d3d3d" stroke-width="1.1"/><path d="M4.5 7.5 H10.5 M8.2 5 L10.6 7.5 L8.2 10" fill="none" stroke="#3d3d3d" stroke-width="1.1"/></svg>
<svg style="left:1124px;top:100px" width="16" height="16" viewBox="0 0 16 16"><path d="M1 8.2 L8 1.5 L15 8.2 M3 6.8 V14.5 H6.5 V10 H9.5 V14.5 H13 V6.8" fill="none" stroke="#e0e0e0" stroke-width="1.2"/></svg>
<svg style="left:1145px;top:100px" width="17" height="17" viewBox="0 0 17 17"><path d="M7.5 6.5 V0.5 H15.5 V11.5 H11" fill="#2a2a2a" stroke="#d8d8d8" stroke-width="1"/><path d="M9 2.5 H10.5 M11.5 2.5 H14 M11.5 4.5 H14 M11.5 6.5 H14 M11.5 8.5 H14" stroke="#d8d8d8" stroke-width="1"/><path d="M7.6 7 L3.8 10.6 L1.6 9 L0.5 9.6 V13.9 L1.6 14.5 L3.8 12.9 L7.6 16.4 L10 15.4 V8 Z M7.7 9.8 V13.6 L5.2 11.7 Z" fill="#a87be0" fill-rule="evenodd"/></svg>
<div class="sep" style="left:1168px;top:99px;height:18px;background:#454545"></div>
<svg style="left:1176px;top:99px" width="17" height="17" viewBox="0 0 17 17"><path d="M0.7 0.8 H6.3 L4 3.4 V5.8 H3 V3.4 Z" fill="#4f9fe8"/><circle cx="9.5" cy="10" r="5" fill="none" stroke="#d8d8d8" stroke-width="1.2"/><path d="M9.5 7 V10.2 H12" fill="none" stroke="#d8d8d8" stroke-width="1.2"/></svg>
<div class="arr" style="left:1199px;top:107px;border-left-width:3px;border-right-width:3px;border-top:3px solid #d0d0d0"></div>
<svg style="left:1212px;top:102px" width="14" height="12" viewBox="0 0 14 12"><path d="M13.5 3.5 H1 M4.2 0.5 L1 3.5 M0.5 7.5 H13 M9.8 10.5 L13 7.5" fill="none" stroke="#d8d8d8" stroke-width="1.1"/></svg>
<svg style="left:1233px;top:100px" width="16" height="16" viewBox="0 0 16 16"><path d="M8.5 1.5 A6.5 6.5 0 1 1 2.2 6" fill="none" stroke="#4f9fe8" stroke-width="1.3"/><path d="M0.8 2.5 L2 6.4 L5.8 5.2" fill="none" stroke="#4f9fe8" stroke-width="1.3"/></svg>
<svg style="left:1259px;top:98.5px" width="8" height="4"><path d="M0 0 L2.2 1.7 L0 3.4 Z M4.2 0 L6.4 1.7 L4.2 3.4 Z" fill="#d8d8d8"/></svg>
<div class="a" style="left:1073px;top:122px;width:194px;height:20px;background:#333"></div>
<div class="t" style="left:1077.7px;top:125px;line-height:16px;height:16px;letter-spacing:-0.11px;color:#d0d0d0">Search Solution Explorer (Ctrl</div>
<svg style="left:1238px;top:126px" width="14" height="14" viewBox="0 0 14 14"><circle cx="8.6" cy="5.2" r="3.4" fill="none" stroke="#e0e0e0" stroke-width="1.6"/><path d="M6 8 L1.5 12.5" stroke="#e0e0e0" stroke-width="2"/></svg>
<div class="arr" style="left:1256.5px;top:132px;border-left-width:3px;border-right-width:3px;border-top:3px solid #d0d0d0"></div>
<div class="a" style="left:1073px;top:165px;width:194px;height:18px;background:#383838"></div>
<svg style="left:1088px;top:148px" width="16" height="15" viewBox="0 0 16 15"><path d="M4 12.4 H0.6 V0.6 H13.4 V5 M0.6 3 H13.4" fill="none" stroke="#d0d0d0" stroke-width="1.1"/><path d="M11.6 5 L8 8.6 L5.8 6.9 L4.6 7.5 V12 L5.8 12.6 L8 10.9 L11.6 14.4 L14 13.4 V6 Z M11.7 7.8 V11.6 L9.4 9.7 Z" fill="#a87be0" fill-rule="evenodd"/></svg>
<div class="a" style="left:1073px;top:145px;width:194px;height:20px;overflow:hidden"><div class="t" style="left:34.7px;top:2px;line-height:16px;height:16px;letter-spacing:0.00px;">Solution 'WPhone' (1 of 1 project)</div></div>
<svg style="left:1083px;top:171px" width="7" height="7" viewBox="0 0 7 7"><path d="M6.5 0.5 V6.5 H0.5 Z" fill="#e0e0e0"/></svg>
<div class="a" style="left:1106px;top:168px;width:14px;height:12px;border:1px solid #c8c8c8"></div>
<div class="t" style="left:1108px;top:169px;font-size:9.5px;line-height:10px;height:10px;color:#5eb0ff;letter-spacing:0;transform:scaleX(0.8);transform-origin:0 0">VB</div>
<div class="t" style="left:1126.4px;top:166px;line-height:16px;height:16px;letter-spacing:-0.31px;font-weight:bold;">WPhone</div>
<svg style="left:0;top:0" width="1275" height="300"><path d="M1124.4 199.6 L1131.8 192.2" stroke="#c8c8c8" stroke-width="2.6" stroke-linecap="round"/><path d="M1124.6 199.4 L1131.5 192.5" stroke="#1f1f1f" stroke-width="0.9" stroke-linecap="round"/><path d="M1137.9 189.2 C1138.6 191.6 1137 194.2 1134.4 194.5 C1131.6 194.8 1129.6 192.4 1130 189.9 C1130.4 187.6 1132.6 186.2 1134.8 186.6 L1132.4 189 L1133 191.4 L1135.4 192 Z" fill="#dcdcdc"/><g fill="#1f1f1f" stroke-width="1" shape-rendering="crispEdges"><rect x="1133.5" y="206.5" width="5" height="5" stroke="#8a8a8a"/><rect x="1125.5" y="207.5" width="4" height="4" stroke="#a8a8a8"/><path d="M1127 212.5 H1132" stroke="#c8c8c8"/><rect x="1123.5" y="210.5" width="4" height="4" stroke="#e0e0e0"/><rect x="1131.5" y="210.5" width="5" height="5" stroke="#e0e0e0"/></g><path d="M1127.5 228 V224.5 H1133.5 L1137 228 V237.5 H1133" fill="#2a2a2a" stroke="#c8c8c8" stroke-width="1"/><path d="M1123.4 231.6 C1123 233.4 1124.4 235 1126.2 234.8 L1129.8 238.6 L1131.4 237 L1127.8 233.2 C1128.2 231.4 1126.8 229.8 1125 230 L1126.4 231.6 L1125.8 232.8 L1124.6 233 Z" fill="#e6e6e6"/><g fill="none" shape-rendering="crispEdges"><rect x="1124.5" y="243.5" width="13" height="12" stroke="#c8c8c8"/><path d="M1124.5 246.5 H1137.5" stroke="#c8c8c8"/><rect x="1126.5" y="250.5" width="4" height="3" stroke="#a87be0"/><rect x="1132.5" y="248.5" width="3" height="3" stroke="#a87be0"/></g><path d="M1125.5 262.5 H1133.5 L1137 266 V275.5 H1125.5 Z" fill="#2a2a2a" stroke="#c8c8c8" stroke-width="1"/><path d="M1127.5 265.5 H1133 M1134.5 267 V274" stroke="#c8c8c8" stroke-width="1" stroke-dasharray="1 1"/><path d="M1129.5 267.8 L1130.3 269.8 H1132.3 L1130.7 271 L1131.3 273 L1129.5 271.8 L1127.7 273 L1128.3 271 L1126.7 269.8 H1128.7 Z" fill="#e6e6e6"/></svg>
<div class="t" style="left:1143.3px;top:185px;line-height:16px;height:16px;letter-spacing:0.13px;">My Project</div>
<svg style="left:1101px;top:207px" width="6" height="10" viewBox="0 0 6 10"><path d="M0.6 0.8 L5.2 5 L0.6 9.2 Z" fill="none" stroke="#c8c8c8" stroke-width="1"/></svg>
<div class="t" style="left:1143.3px;top:204px;line-height:16px;height:16px;letter-spacing:-0.34px;">References</div>
<div class="t" style="left:1144.3px;top:223px;line-height:16px;height:16px;letter-spacing:0.28px;">App.config</div>
<svg style="left:1101px;top:245px" width="6" height="10" viewBox="0 0 6 10"><path d="M0.6 0.8 L5.2 5 L0.6 9.2 Z" fill="none" stroke="#c8c8c8" stroke-width="1"/></svg>
<div class="t" style="left:1143.3px;top:242px;line-height:16px;height:16px;letter-spacing:0.05px;">Form1.vb</div>
<div class="t" style="left:1143.5px;top:261px;line-height:16px;height:16px;letter-spacing:0.06px;">phone-39-512.ico</div>
<div class="a" style="left:1073px;top:282px;width:194px;height:17px;background:#2e2e2e"></div>
<div class="arr" style="left:1079px;top:286px;border:none;border-top:4px solid transparent;border-bottom:4px solid transparent;border-right:5px solid #999"></div>
<div class="a" style="left:1090px;top:286px;width:145px;height:9px;background:#4d4d4d"></div>
<div class="arr" style="left:1256px;top:286px;border:none;border-top:4px solid transparent;border-bottom:4px solid transparent;border-left:5px solid #999"></div>
<div class="a" style="left:1072px;top:299px;width:102px;height:21px;background:#1f1f1f;border:1px solid #3d3d3d;border-top:1px solid #1f1f1f"></div>
<div class="t" style="left:1077.7px;top:301px;line-height:16px;height:16px;letter-spacing:-0.04px;color:#fff">Solution Explorer</div>
<div class="t" style="left:1179.4px;top:301px;line-height:16px;height:16px;letter-spacing:-0.18px;color:#b0b0b0">Git Changes</div>
<div class="a" style="left:1072px;top:326px;width:196px;height:475px;border:1px solid #3d3d3d;background:#1f1f1f"></div>
<div class="t" style="left:1076.2px;top:329.5px;line-height:16px;height:16px;letter-spacing:-0.08px;color:#d0d0d0">Properties</div>
<div class="arr" style="left:1218.5px;top:336px;border-left-width:4px;border-right-width:4px;border-top:4px solid #d0d0d0"></div>
<svg style="left:1235px;top:332px" width="9" height="12" viewBox="0 0 9 12"><path d="M2.5 0.5 H6.5 V6 M2.5 0.5 V6 M5.5 0.5 V6 M0.5 6.5 H8.5 M4.5 6.5 V11.5" fill="none" stroke="#e6e6e6" stroke-width="1"/></svg>
<svg style="left:1251.3px;top:332.3px" width="9.5" height="9.5" viewBox="0 0 10 10"><path d="M0.7 0.7 L9.3 9.3 M9.3 0.7 L0.7 9.3" stroke="#e6e6e6" stroke-width="1.3"/></svg>
<div class="a" style="left:1073px;top:348px;width:193px;height:24px;background:#383838"></div>
<div class="arr" style="left:1257.5px;top:359px;border-left-width:3px;border-right-width:3px;border-top:3px solid #d0d0d0"></div>
<div class="a" style="left:1099px;top:374px;width:23px;height:22px;background:#2c2c2c;border:1px solid #7160e8"></div>
<svg style="left:0;top:0" width="1275" height="400"><g shape-rendering="crispEdges"><rect x="1080" y="378" width="5" height="5" fill="#dcdcdc"/><rect x="1080" y="387" width="5" height="5" fill="#dcdcdc"/><path d="M1081 380.5 H1084 M1082.5 379 V382 M1081 389.5 H1084 M1082.5 388 V391" stroke="#1f1f1f" stroke-width="1"/><path d="M1086 378.5 H1091 M1086 380.5 H1091 M1086 382.5 H1091 M1086 384.5 H1091 M1086 386.5 H1091 M1086 389.5 H1091 M1086 391.5 H1091 M1092 380.5 H1094 M1092 382.5 H1094 M1092 384.5 H1094 M1092 386.5 H1094 M1092 391.5 H1094" stroke="#dcdcdc" stroke-width="1"/><rect x="1103" y="378" width="7" height="7" fill="#dcdcdc"/></g><path d="M1114.1 381 V389 M1111.3 386.2 L1114.1 389.6 L1116.9 386.2" fill="none" stroke="#4cc2f5" stroke-width="2" stroke-linejoin="round" stroke-linecap="round"/><circle cx="1142.9" cy="381.4" r="4.7" fill="#8e8e8e"/><path d="M1140.4 383.9 L1132 392.3" stroke="#8e8e8e" stroke-width="3.8"/><path d="M1130.8 393 V390.5 L1133 393 Z M1134.6 392.4 L1136.6 390.4 L1137.6 391.4 L1135.6 393.4 Z" fill="#8e8e8e"/><path d="M1143 379 L1145.4 381.4" stroke="#686868" stroke-width="2.2"/></svg>
<div class="t b" style="left:1103.6px;top:378px;font-size:8px;line-height:7px;height:7px;color:#1f1f1f;letter-spacing:0">A</div>
<div class="t b" style="left:1103.8px;top:386px;font-size:8px;line-height:7px;height:7px;color:#e0e0e0;letter-spacing:0">Z</div>
<div class="sep" style="left:1125px;top:376px;height:20px;background:#454545"></div>
<div class="a" style="left:1073px;top:398px;width:194px;height:340px;border:1px solid #383838"></div>
</body></html>
